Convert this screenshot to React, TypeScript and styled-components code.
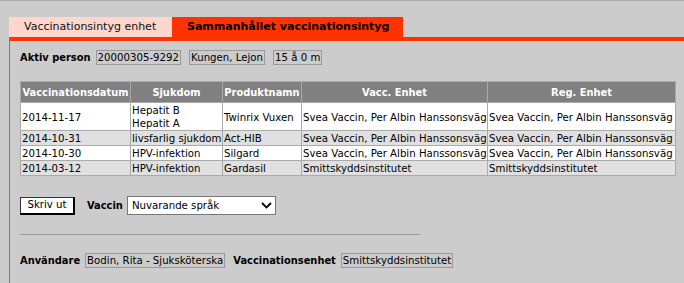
import React from "react";
import styled, { createGlobalStyle } from "styled-components";

const GlobalStyle = createGlobalStyle`
  html, body {
    margin: 0;
    padding: 0;
    background: #cccccc;
  }
  body {
    font-family: "DejaVu Sans", Verdana, sans-serif;
    font-size: 10.2px;
    color: #000;
  }
`;

const Page = styled.div`
  border-top: 1px solid #aaaaaa;
  padding: 16px 0 0 9px;
  min-height: 266px;
  display: flex;
  flex-direction: column;
`;

const TabBar = styled.div`
  display: flex;
`;

const Tab = styled.div<{ active?: boolean }>`
  height: 20px;
  line-height: 20px;
  padding: 0 15px;
  width: ${(p) => (p.active ? "201px" : "133px")};
  background: ${(p) => (p.active ? "#ff3300" : "#ffd6cc")};
  font-size: 11px;
  font-weight: ${(p) => (p.active ? "bold" : "normal")};
  color: ${(p) => (p.active ? "#000" : "#111")};
  white-space: nowrap;
`;

const Panel = styled.div`
  flex: 1;
  border-top: 4px solid #ff3300;
  border-left: 1px solid #ff4a1f;
  padding: 9px 10px 16px 10px;
`;

const InfoRow = styled.div`
  display: flex;
  align-items: center;
  gap: 4px;
`;

const Label = styled.span`
  font-weight: bold;
  font-size: 9.9px;
  margin-right: 1px;
  white-space: nowrap;
`;

const Value = styled.span<{ gapAfter?: number }>`
  border: 1px solid #999999;
  padding: 0 1px;
  height: 13px;
  line-height: 13px;
  margin-right: ${(p) => p.gapAfter ?? 0}px;
  white-space: nowrap;
`;

const Table = styled.table`
  margin-top: 16px;
  width: 655px;
  table-layout: fixed;
  border-collapse: collapse;
  border-top: 1px solid #eeeeee;
  border-left: 1px solid #eeeeee;
  border-right: 1px solid #999999;
  border-bottom: 1px solid #999999;
`;

const Th = styled.th`
  background: #808080;
  color: #fff;
  font-weight: bold;
  font-size: 9.9px;
  height: 20px;
  padding: 0 1px;
  border: 1px solid #aaaaaa;
  white-space: nowrap;
  overflow: hidden;
`;

const Row = styled.tr<{ shade?: boolean }>`
  background: ${(p) => (p.shade ? "#e0e0e0" : "#ffffff")};
`;

const Td = styled.td`
  padding: 1px 1px 0 1px;
  line-height: 13px;
  border: 1px solid #aaaaaa;
  text-align: left;
  white-space: nowrap;
  overflow: hidden;
  vertical-align: middle;
`;

const Controls = styled.div`
  margin-top: 20px;
  display: flex;
  align-items: center;
`;

const PrintButton = styled.button`
  width: 55px;
  height: 18px;
  padding: 0 0 1px 0;
  background: #fff;
  border-top: 1px solid #333;
  border-left: 1px solid #333;
  border-right: 2px solid #000;
  border-bottom: 2px solid #000;
  font-family: inherit;
  font-size: 10.2px;
  color: #000;
  flex-shrink: 0;
`;

const ControlLabel = styled(Label)`
  margin: 0 4px 0 12px;
`;

const SelectBox = styled.div`
  width: 149px;
  height: 19px;
  box-sizing: border-box;
  flex-shrink: 0;
  background: #fff;
  border: 1px solid #777777;
  display: flex;
  align-items: center;
  justify-content: space-between;
  padding: 0 3px 0 4px;
`;

const Rule = styled.hr`
  margin: 19px 0 0 0;
  width: 400px;
  border: none;
  border-top: 1px solid #999999;
  height: 0;
`;

const Footer = styled(InfoRow)`
  margin-top: 18px;
`;

const cols = [110, 92, 79, 186, 188];

const rows = [
  { date: "2014-11-17", sjukdom: ["Hepatit B", "Hepatit A"], prod: "Twinrix Vuxen", vacc: "Svea Vaccin, Per Albin Hanssonsväg", reg: "Svea Vaccin, Per Albin Hanssonsväg" },
  { date: "2014-10-31", sjukdom: ["livsfarlig sjukdom"], prod: "Act-HIB", vacc: "Svea Vaccin, Per Albin Hanssonsväg", reg: "Svea Vaccin, Per Albin Hanssonsväg" },
  { date: "2014-10-30", sjukdom: ["HPV-infektion"], prod: "Silgard", vacc: "Svea Vaccin, Per Albin Hanssonsväg", reg: "Svea Vaccin, Per Albin Hanssonsväg" },
  { date: "2014-03-12", sjukdom: ["HPV-infektion"], prod: "Gardasil", vacc: "Smittskyddsinstitutet", reg: "Smittskyddsinstitutet" },
];

function Chevron() {
  return (
    <svg width="11" height="7" viewBox="0 0 11 7">
      <path d="M1 1 L5.5 5.5 L10 1" fill="none" stroke="#000" strokeWidth="1.8" />
    </svg>
  );
}

export default function App() {
  return (
    <>
      <GlobalStyle />
      <Page>
        <TabBar>
          <Tab>Vaccinationsintyg enhet</Tab>
          <Tab active>Sammanhållet vaccinationsintyg</Tab>
        </TabBar>
        <Panel>
          <InfoRow>
            <Label>Aktiv person</Label>
            <Value gapAfter={4}>20000305-9292</Value>
            <Value gapAfter={4}>Kungen, Lejon</Value>
            <Value>15 å 0 m</Value>
          </InfoRow>
          <Table>
            <colgroup>
              {cols.map((w, i) => (
                <col key={i} style={{ width: w }} />
              ))}
            </colgroup>
            <thead>
              <tr>
                <Th>Vaccinationsdatum</Th>
                <Th>Sjukdom</Th>
                <Th>Produktnamn</Th>
                <Th>Vacc. Enhet</Th>
                <Th>Reg. Enhet</Th>
              </tr>
            </thead>
            <tbody>
              {rows.map((r, i) => (
                <Row key={i} shade={i % 2 === 1}>
                  <Td>{r.date}</Td>
                  <Td>
                    {r.sjukdom.map((s) => (
                      <div key={s}>{s}</div>
                    ))}
                  </Td>
                  <Td>{r.prod}</Td>
                  <Td>{r.vacc}</Td>
                  <Td>{r.reg}</Td>
                </Row>
              ))}
            </tbody>
          </Table>
          <Controls>
            <PrintButton>Skriv ut</PrintButton>
            <ControlLabel>Vaccin</ControlLabel>
            <SelectBox>
              <span>Nuvarande språk</span>
              <Chevron />
            </SelectBox>
          </Controls>
          <Rule />
          <Footer>
            <Label>Användare</Label>
            <Value gapAfter={4}>Bodin, Rita - Sjuksköterska</Value>
            <Label>Vaccinationsenhet</Label>
            <Value>Smittskyddsinstitutet</Value>
          </Footer>
        </Panel>
      </Page>
    </>
  );
}
